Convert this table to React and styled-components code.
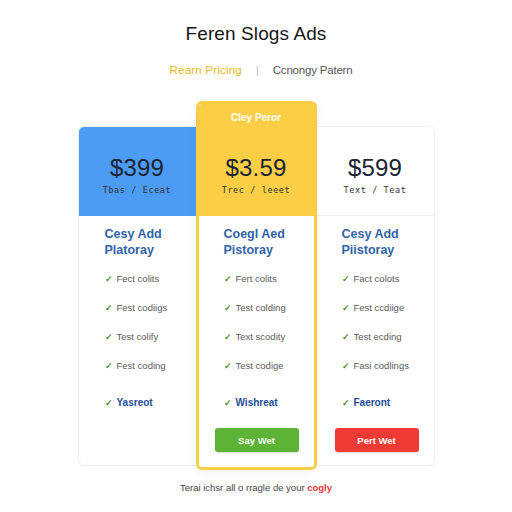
import React from "react";
import styled, { createGlobalStyle, css } from "styled-components";

const Global = createGlobalStyle`
  html, body { margin: 0; padding: 0; background: #ffffff; }
  body { font-family: "Liberation Sans", Arial, sans-serif; }
`;

const Page = styled.div`
  width: 512px;
  height: 512px;
  box-sizing: border-box;
  padding-top: 22px;
  display: flex;
  flex-direction: column;
  align-items: center;
  background: #fff;
`;

const Title = styled.h1`
  margin: 0;
  font-size: 19px;
  line-height: 24px;
  font-weight: 400;
  color: #151515;
  letter-spacing: 0.1px;
`;

const Tabs = styled.div`
  margin-top: 17px;
  display: flex;
  align-items: center;
  gap: 14px;
  font-size: 11.5px;
  line-height: 14px;
  margin-left: 10px;
`;

const Tab = styled.span`
  color: ${(p) => (p.$active ? "#e9b824" : "#555")};
  letter-spacing: ${(p) => (p.$active ? "0.2px" : "-0.2px")};
`;

const Sep = styled.span`
  color: #bbb;
  font-size: 11px;
`;

const Cards = styled.div`
  margin-top: 24px;
  display: flex;
  align-items: flex-end;
`;

const Card = styled.div`
  box-sizing: border-box;
  display: flex;
  flex-direction: column;
  background: #fff;
  ${(p) =>
    p.$featured
      ? css`
          width: 121px;
          height: 369px;
          border: 3px solid #f7cf47;
          border-radius: 6px;
          box-shadow: 0 2px 8px rgba(0, 0, 0, 0.06);
          overflow: hidden;
        `
      : css`
          width: 118px;
          height: 340px;
          margin-bottom: 4px;
          border: 1px solid #eeeeee;
          border-${p.$side}: none;
          border-radius: ${p.$side === "right" ? "6px 0 0 6px" : "0 6px 6px 0"};
          overflow: hidden;
        `}
`;

const Header = styled.div`
  box-sizing: border-box;
  display: flex;
  flex-direction: column;
  align-items: center;
  background: ${(p) => p.$bg};
  height: ${(p) => (p.$featured ? "112px" : "89px")};
  padding-top: ${(p) => (p.$featured ? "7px" : "27px")};
  border-bottom: ${(p) => (p.$bg === "#fff" ? "1px solid #eeeeee" : "none")};
`;

const Label = styled.div`
  font-size: 10px;
  line-height: 14px;
  font-weight: 700;
  color: #fff;
  margin-bottom: 29px;
`;

const Price = styled.div`
  font-family: "Liberation Sans", Arial, sans-serif;
  font-size: 24px;
  line-height: 28px;
  color: #1b2433;
  letter-spacing: 0.2px;
`;

const Per = styled.div`
  margin-top: 2px;
  font-family: "DejaVu Sans Mono", monospace;
  font-size: 8.5px;
  line-height: 12px;
  color: #333;
  letter-spacing: 0.6px;
`;

const Body = styled.div`
  flex: 1;
  display: flex;
  flex-direction: column;
  padding: 10px 0 0 ${(p) => p.$pad}px;
`;

const Heading = styled.div`
  font-size: 12.5px;
  line-height: 16px;
  font-weight: 700;
  color: #3163a8;
  margin-bottom: 14px;
`;

const Features = styled.ul`
  list-style: none;
  margin: 0;
  padding: 0;
  display: flex;
  flex-direction: column;
  gap: 15px;
`;

const Feature = styled.li`
  display: flex;
  align-items: center;
  gap: 4px;
  font-size: 9.5px;
  line-height: 14px;
  color: ${(p) => (p.$strong ? "#244c9c" : "#5a5a5a")};
  font-weight: ${(p) => (p.$strong ? 700 : 400)};
  ${(p) => p.$strong && "margin-top: 8px; font-size: 10px;"}
`;

const Check = styled.span`
  color: #4b8d2c;
  font-size: 9px;
  font-weight: 700;
`;

const Button = styled.button`
  margin-top: 18px;
  margin-left: ${(p) => p.$ml}px;
  width: 84px;
  height: 24px;
  border: none;
  border-radius: 3px;
  background: ${(p) => p.$bg};
  color: #fff;
  font-family: "Liberation Sans", Arial, sans-serif;
  font-size: 9.5px;
  font-weight: 700;
  box-shadow: 0 1px 2px rgba(0, 0, 0, 0.15);
`;

const Footer = styled.div`
  margin-top: 12px;
  font-size: 9.5px;
  line-height: 12px;
  color: #444;
`;

const Red = styled.span`
  color: #e53a3a;
  font-weight: 700;
`;

const plans = [
  {
    side: "right",
    bg: "#4c9cf6",
    price: "$399",
    per: "Tbas / Eceat",
    heading: ["Cesy Add", "Platoray"],
    features: ["Fect colits", "Fest codiigs", "Test colify", "Fest coding"],
    strong: "Yasreot",
    pad: 26,
  },
  {
    featured: true,
    bg: "#fbce45",
    label: "Cley Peror",
    price: "$3.59",
    per: "Trec / leeet",
    heading: ["Coegl Aed", "Pistoray"],
    features: ["Fert colits", "Test colding", "Text scodity", "Test codige"],
    strong: "Wishreat",
    pad: 25,
    button: { text: "Say Wet", bg: "#5cb335", ml: -9 },
  },
  {
    side: "left",
    bg: "#fff",
    price: "$599",
    per: "Text / Teat",
    heading: ["Cesy Add", "Piistoray"],
    features: ["Fact colots", "Fest ccdiige", "Test ecding", "Fasi codlings"],
    strong: "Faeront",
    pad: 25,
    button: { text: "Pert Wet", bg: "#ef3a35", ml: -7 },
  },
];

export default function App() {
  return (
    <>
      <Global />
      <Page>
        <Title>Feren Slogs Ads</Title>
        <Tabs>
          <Tab $active>Rearn Pricing</Tab>
          <Sep>|</Sep>
          <Tab>Ccnongy Patern</Tab>
        </Tabs>
        <Cards>
          {plans.map((p, i) => (
            <Card key={i} $featured={p.featured} $side={p.side}>
              <Header $bg={p.bg} $featured={p.featured}>
                {p.label && <Label>{p.label}</Label>}
                <Price>{p.price}</Price>
                <Per>{p.per}</Per>
              </Header>
              <Body $pad={p.pad}>
                <Heading>
                  {p.heading[0]}
                  <br />
                  {p.heading[1]}
                </Heading>
                <Features>
                  {p.features.map((f) => (
                    <Feature key={f}>
                      <Check>✓</Check>
                      {f}
                    </Feature>
                  ))}
                  <Feature $strong>
                    <Check>✓</Check>
                    {p.strong}
                  </Feature>
                </Features>
                {p.button && (
                  <Button $bg={p.button.bg} $ml={p.button.ml}>
                    {p.button.text}
                  </Button>
                )}
              </Body>
            </Card>
          ))}
        </Cards>
        <Footer>
          Terai ichsr all o rragle de your <Red>cogly</Red>
        </Footer>
      </Page>
    </>
  );
}
